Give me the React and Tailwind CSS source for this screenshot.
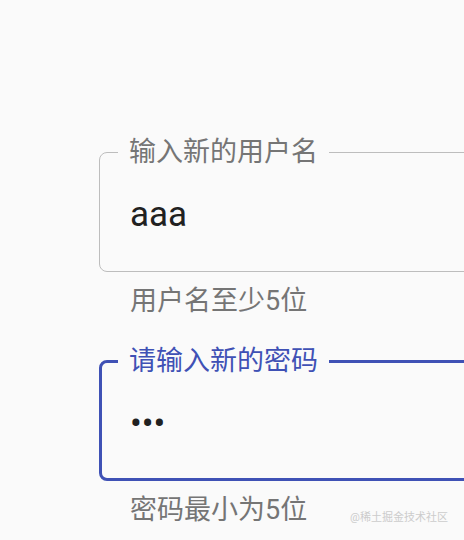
import React from 'react';

const font = { fontFamily: 'Roboto, "Noto Sans CJK SC", sans-serif' };

const OutlinedField = ({ label, value, helper, focused = false }) => {
  return (
    <div className="flex flex-col">
      <fieldset
        className={`w-[400px] rounded-[8px] ${focused ? 'border-[3px] border-[#3f51b5]' : 'border border-[#bdbdbd]'}`}
      >
        <legend
          className={`px-[11px] text-[27px] leading-[32px] ${focused ? 'ml-[16px] text-[#3f51b5]' : 'ml-[18px] text-[#757575]'}`}
        >
          {label}
        </legend>
        <div className={`pt-[27px] text-[35px] leading-[40px] text-[#212121] ${focused ? 'h-[101px] pl-[28px]' : 'h-[103px] pl-[30px]'}`}>
          {value}
        </div>
      </fieldset>
      <p className="mt-[13px] pl-[31px] text-[27px] leading-[32px] text-[#757575]">{helper}</p>
    </div>
  );
};

const App = () => {
  return (
    <div className="relative w-[464px] h-[540px] overflow-hidden bg-[#fafafa]" style={font}>
      <div className="flex flex-col gap-[28px] pt-[136px] pl-[99px]">
        <OutlinedField label="输入新的用户名" value="aaa" helper="用户名至少5位" />
        <OutlinedField label="请输入新的密码" value="•••" helper="密码最小为5位" focused />
      </div>
      <span className="absolute right-[16px] bottom-[15px] text-[11px] leading-[14px] text-[#cccccc]">
        @稀土掘金技术社区
      </span>
    </div>
  );
};

export default App;
